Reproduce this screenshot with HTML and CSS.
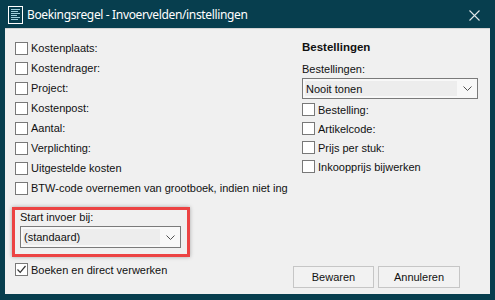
FILE: index.html
```html
<!DOCTYPE html>
<html lang="nl">
<head>
  <meta charset="UTF-8">
  <title>Boekingsregel - Invoervelden/instellingen</title>
  <link rel="stylesheet" href="styles.css">
</head>
<body>
  <div class="window">
    <div class="titlebar">
      <svg class="app-icon" width="15" height="18" viewBox="0 0 15 18">
        <rect x="0.5" y="0.5" width="14" height="17" fill="none" stroke="#ffffff"/>
        <rect x="3" y="3" width="9" height="1" fill="#9fd0dc"/>
        <rect x="3" y="5" width="7" height="1" fill="#9fd0dc"/>
        <rect x="3" y="7" width="9" height="1" fill="#9fd0dc"/>
        <rect x="3" y="9" width="6" height="1" fill="#9fd0dc"/>
        <rect x="3" y="11" width="9" height="1" fill="#9fd0dc"/>
        <rect x="3" y="13" width="7" height="1" fill="#9fd0dc"/>
      </svg>
      <span class="title">Boekingsregel - Invoervelden/instellingen</span>
      <svg class="close" width="11" height="11" viewBox="0 0 11 11">
        <path d="M0.5 0.5 L10.5 10.5 M10.5 0.5 L0.5 10.5" stroke="#dfe6e8" stroke-width="1.1"/>
      </svg>
    </div>

    <div class="client">
      <div class="columns">
        <div class="left">
          <label class="check"><span class="box"></span>Kostenplaats:</label>
          <label class="check"><span class="box"></span>Kostendrager:</label>
          <label class="check"><span class="box"></span>Project:</label>
          <label class="check"><span class="box"></span>Kostenpost:</label>
          <label class="check"><span class="box"></span>Aantal:</label>
          <label class="check"><span class="box"></span>Verplichting:</label>
          <label class="check"><span class="box"></span>Uitgestelde kosten</label>
          <label class="check"><span class="box"></span>BTW-code overnemen van grootboek, indien niet ing</label>
        </div>

        <div class="right">
          <div class="group-title">Bestellingen</div>
          <div class="field-label">Bestellingen:</div>
          <div class="select wide">
            <span class="select-text">Nooit tonen</span>
            <svg class="chevron" width="9" height="5" viewBox="0 0 9 5"><path d="M0.5 0.5 L4.5 4.5 L8.5 0.5" fill="none" stroke="#505050"/></svg>
          </div>
          <label class="check small"><span class="box"></span>Bestelling:</label>
          <label class="check small"><span class="box"></span>Artikelcode:</label>
          <label class="check small"><span class="box"></span>Prijs per stuk:</label>
          <label class="check small"><span class="box"></span>Inkoopprijs bijwerken</label>
        </div>
      </div>

      <div class="highlight">
        <div class="field-label">Start invoer bij:</div>
        <div class="select">
          <span class="select-text">(standaard)</span>
          <svg class="chevron" width="9" height="5" viewBox="0 0 9 5"><path d="M0.5 0.5 L4.5 4.5 L8.5 0.5" fill="none" stroke="#505050"/></svg>
        </div>
      </div>

      <div class="footer">
        <label class="check checked">
          <span class="box">
            <svg width="11" height="11" viewBox="0 0 11 11"><path d="M1.5 5.5 L4.2 8.3 L9.5 2" fill="none" stroke="#333" stroke-width="1.2"/></svg>
          </span>Boeken en direct verwerken
        </label>
        <div class="buttons">
          <button class="btn save">Bewaren</button>
          <button class="btn cancel">Annuleren</button>
        </div>
      </div>
    </div>
  </div>
</body>
</html>
```

FILE: styles.css
```css
body {
  margin: 0;
  background-color: #073e4e;
  font-family: "Liberation Sans", Arial, sans-serif;
  font-size: 11px;
  color: #111;
}
.window {
  width: 495px;
  height: 300px;
  display: flex;
  flex-direction: column;
}
.titlebar {
  height: 28px;
  display: flex;
  align-items: center;
  padding-left: 8px;
  color: white;
}
.app-icon {
  margin-top: 2px;
}
.title {
  margin-left: 4px;
  font-family: "Noto Sans", sans-serif;
  font-size: 12px;
  letter-spacing: -0.35px;
}
.close {
  margin-left: auto;
  margin-right: 15px;
  margin-top: 2px;
}
.client {
  flex: 1;
  margin: 0 5px 6px 5px;
  background-color: #f0f0f0;
  border-top: 1px solid #d4d4d4;
  padding: 9px 0 0 10px;
  display: flex;
  flex-direction: column;
}
.columns {
  display: flex;
}
.left {
  width: 267px;
}
.right {
  width: 176px;
  margin-left: 20px;
}
.check {
  display: flex;
  align-items: center;
  height: 20px;
  white-space: nowrap;
}
.check.small {
  height: 19px;
}
.box {
  flex: none;
  width: 11px;
  height: 11px;
  border: 1px solid #787878;
  background: white;
  margin-right: 3px;
  display: flex;
  align-items: center;
  justify-content: center;
}
.group-title {
  font-weight: bold;
  font-size: 11.5px;
  line-height: 13px;
  margin-top: 3px;
}
.field-label {
  line-height: 13px;
}
.right .field-label {
  margin-top: 9px;
}
.select {
  margin-top: 2px;
  height: 20px;
  width: 159px;
  border: 1px solid #7a7a7a;
  background: #f8f8f8;
  display: flex;
  align-items: center;
  box-sizing: content-box;
}
.select.wide {
  width: 174px;
  height: 19px;
  margin-bottom: 1px;
}
.select-text {
  flex: 1;
  align-self: stretch;
  margin: 2px 0 2px 2px;
  padding-left: 1px;
  background: #ededed;
  display: flex;
  align-items: center;
}
.chevron {
  margin: 0 5px 0 6px;
}
.highlight {
  margin: 9px 0 0 -3px;
  width: 167px;
  border: 3px solid #ec4343;
  padding: 1px 0 6px 5px;
  box-shadow: 0 0 4px rgba(0, 0, 0, 0.3);
}
.footer {
  display: flex;
  align-items: flex-start;
  padding-right: 30px;
}
.footer .check {
  margin-top: 6px;
  height: 13px;
}
.buttons {
  margin-left: auto;
  margin-top: 9px;
  display: flex;
  gap: 4px;
}
.btn {
  height: 22px;
  background: #f2f2f2;
  border: 1px solid #c6c6c6;
  font-family: "Liberation Sans", Arial, sans-serif;
  font-size: 11px;
  color: #111;
  padding: 0;
}
.btn.save {
  width: 81px;
}
.btn.cancel {
  width: 82px;
}
```
